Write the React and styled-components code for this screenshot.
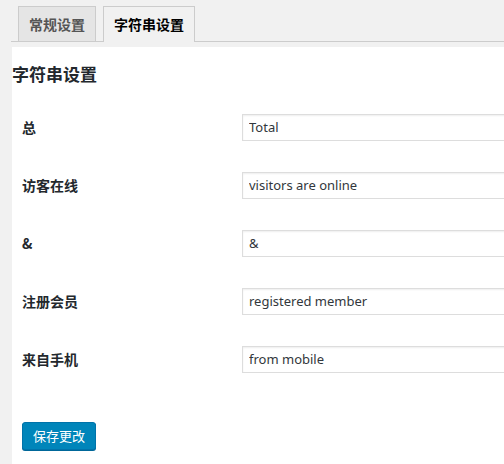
import React from 'react';
import styled, { createGlobalStyle } from 'styled-components';

const GlobalStyle = createGlobalStyle`
  html, body {
    margin: 0;
    padding: 0;
    background: #f1f1f1;
    overflow: hidden;
  }
  body {
    font-family: "Segoe UI", "Noto Sans", "Noto Sans CJK SC", sans-serif;
    color: #23282d;
  }
`;

const Page = styled.div`
  width: 504px;
  height: 464px;
  padding-top: 6px;
  box-sizing: border-box;
  overflow: hidden;
`;

const TabBar = styled.nav`
  display: flex;
  align-items: flex-end;
  gap: 7px;
  margin-left: 11px;
  padding-left: 7px;
  border-bottom: 1px solid #ccc;
`;

const Tab = styled.a`
  display: block;
  padding: 5px 10px;
  line-height: 24px;
  font-size: 14px;
  font-weight: 600;
  font-family: "Noto Sans CJK SC", sans-serif;
  border: 1px solid #ccc;
  border-bottom: none;
  background: ${p => (p.$active ? '#f1f1f1' : '#e5e5e5')};
  color: ${p => (p.$active ? '#000' : '#555')};
  margin-bottom: ${p => (p.$active ? '-1px' : '0')};
  padding-bottom: ${p => (p.$active ? '6px' : '5px')};
  text-decoration: none;
  cursor: pointer;
`;

const Panel = styled.section`
  margin: 5px 0 0 12px;
  background: #fff;
  min-height: 420px;
  padding-left: 10px;
`;

const Heading = styled.h2`
  margin: 0 0 13px -10px;
  padding-top: 16px;
  font-size: 17px;
  line-height: 22px;
  font-weight: 600;
  color: #23282d;
  font-family: "Noto Sans CJK SC", sans-serif;
`;

const FormTable = styled.div`
  display: grid;
  grid-template-columns: 220px 1fr;
  grid-auto-rows: 58px;
  align-items: center;
`;

const Label = styled.label`
  font-size: 14px;
  font-weight: 600;
  color: #23282d;
  font-family: "Noto Sans CJK SC", sans-serif;
`;

const TextInput = styled.input`
  box-sizing: border-box;
  width: 300px;
  height: 27px;
  padding: 0 6px;
  border: 1px solid #ddd;
  box-shadow: inset 0 1px 2px rgba(0, 0, 0, 0.07);
  background: #fff;
  color: #32373c;
  font-size: 13px;
  font-family: "Segoe UI", "Noto Sans", sans-serif;
  outline: none;
`;

const Footer = styled.div`
  padding-top: 34px;
`;

const PrimaryButton = styled.button`
  height: 28px;
  padding: 0 10px 1px;
  border: 1px solid #0073aa;
  border-radius: 3px;
  background: #0085ba;
  box-shadow: 0 1px 0 #006799;
  color: #fff;
  font-size: 13px;
  line-height: 26px;
  font-family: "Noto Sans CJK SC", sans-serif;
  cursor: pointer;
`;

const fields = [
  { label: '总', value: 'Total' },
  { label: '访客在线', value: 'visitors are online' },
  { label: '&', value: '&' },
  { label: '注册会员', value: 'registered member' },
  { label: '来自手机', value: 'from mobile' },
];

const App = () => {
  return (
    <>
      <GlobalStyle />
      <Page>
        <TabBar>
          <Tab>常规设置</Tab>
          <Tab $active>字符串设置</Tab>
        </TabBar>
        <Panel>
          <Heading>字符串设置</Heading>
          <FormTable>
            {fields.map(f => (
              <React.Fragment key={f.label}>
                <Label>{f.label}</Label>
                <TextInput type="text" defaultValue={f.value} />
              </React.Fragment>
            ))}
          </FormTable>
          <Footer>
            <PrimaryButton>保存更改</PrimaryButton>
          </Footer>
        </Panel>
      </Page>
    </>
  );
};

export default App;
